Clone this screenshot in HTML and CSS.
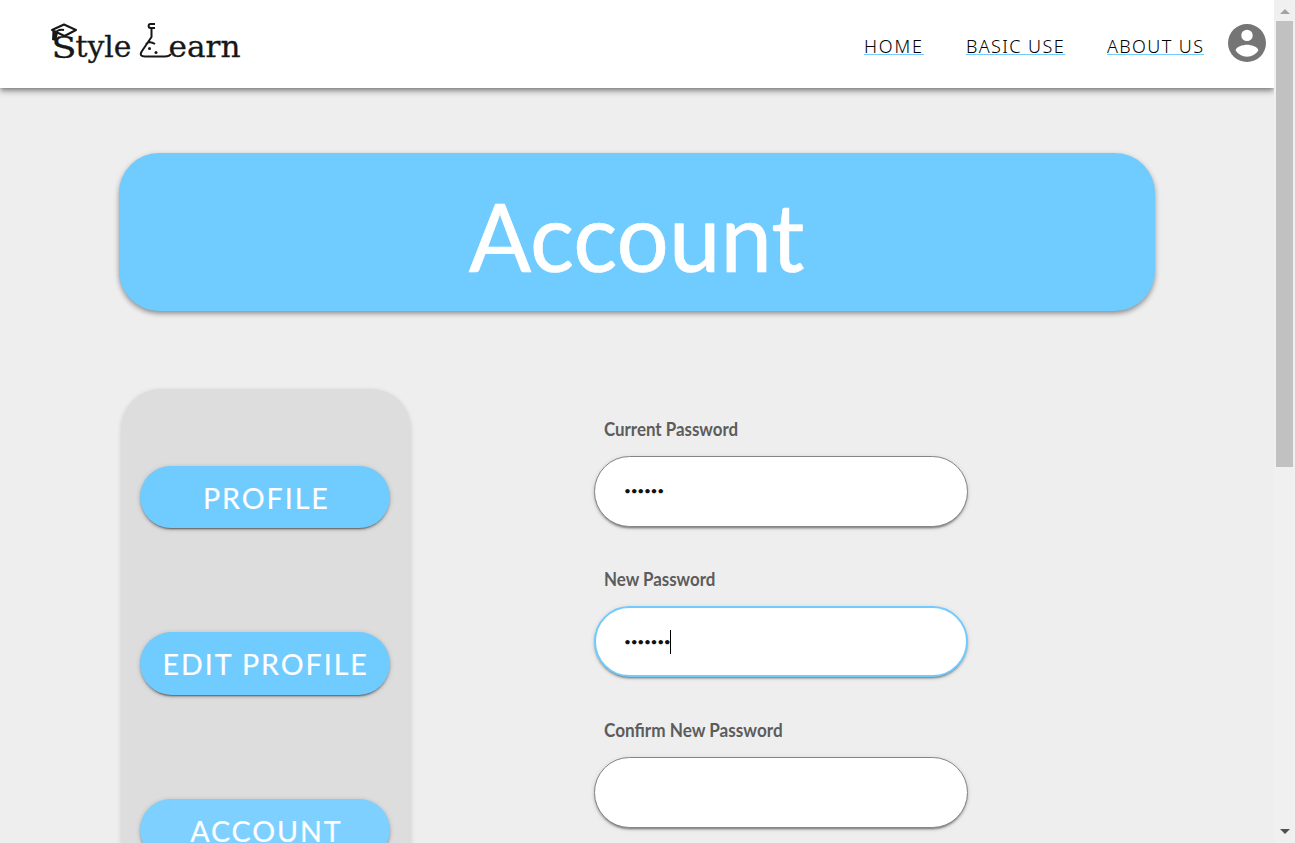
FILE: index.html
```html
<!DOCTYPE html>
<html lang="en">
<head>
<meta charset="utf-8">
<title>Style Learn - Account</title>
<link rel="stylesheet" href="styles.css">
</head>
<body>
<div class="page">
  <header class="header">
    <svg class="logo" width="200" height="56" viewBox="46 16 200 56">
      <g class="logo-text">
        <text x="51.500" y="57.500" textLength="25" lengthAdjust="spacingAndGlyphs">S</text>
        <text x="75.500" y="57" textLength="56" lengthAdjust="spacingAndGlyphs">tyle</text>
        <text x="168.500" y="57" textLength="72" lengthAdjust="spacingAndGlyphs">earn</text>
      </g>
      <g class="logo-line">
        <path d="M52 30L64 24.500L76 30L64.500 36Z"/>
        <path d="M64 30C59 29 55 31 55 36V40"/>
        <path d="M155 24H150.500C148 24 148 28 150.500 28H155M151.500 28V37L142 51C139.500 55 141 56.500 145 56.500H165C168 56.500 170 55.500 171 54M146 44C149 41 152 42 155 44"/>
      </g>
      <path d="M52.500 31L58 33L56 41L52 40Z"/>
      <circle cx="149.500" cy="48.500" r="1.500"/><circle cx="156" cy="52.500" r="1.500"/>
    </svg>
    <nav class="nav">
      <a class="link home">HOME</a>
      <a class="link basic">BASIC USE</a>
      <a class="link about">ABOUT US</a>
    </nav>
    <svg class="avatar" viewBox="2 2 20 20"><path fill-rule="evenodd" d="M12 2a10 10 0 1 0 0 20a10 10 0 0 0 0-20zm0 3a3 3 0 1 1 0 6a3 3 0 0 1 0-6zm0 14.200a7.200 7.200 0 0 1-6-3.220c.03-1.990 4-3.080 6-3.080s5.970 1.090 6 3.080a7.200 7.200 0 0 1-6 3.220z"/></svg>
  </header>
  <main class="main">
    <h1 class="banner"><span class="banner-text">Account</span></h1>
    <div class="columns">
      <aside class="sidebar">
        <a class="button"><span>PROFILE</span></a>
        <a class="button"><span>EDIT PROFILE</span></a>
        <a class="button current"><span>ACCOUNT</span></a>
      </aside>
      <form class="form">
        <label class="label">Current Password</label>
        <div class="field">••••••</div>
        <label class="label">New Password</label>
        <div class="field focused">•••••••<i class="caret"></i></div>
        <label class="label last">Confirm New Password</label>
        <div class="field"></div>
      </form>
    </div>
  </main>
</div>
<div class="scrollbar"><i class="arrow up"></i><i class="thumb"></i><i class="arrow down"></i></div>
</body>
</html>
```

FILE: styles.css
```css
* { box-sizing: border-box; }
body { margin: 0; height: 843px; overflow: hidden; display: flex; background: #eee; font-family: Lato, "Noto Sans", sans-serif; }
.page { width: 1274px; height: 843px; overflow: hidden; }
.header { height: 88px; display: flex; align-items: flex-start; background: #fff; padding: 16px 8.500px 0 46px; box-shadow: 0 2px 4px -1px rgba(0,0,0,.3), 0 4px 5px rgba(0,0,0,.2), 0 1px 10px rgba(0,0,0,.15); }
.logo { flex: none; fill: #171717; }
.logo-text { font: 30px "DejaVu Serif", serif; stroke: #171717; stroke-width: .3; }
.logo-line { fill: none; stroke: #171717; stroke-width: 2; stroke-linejoin: round; }
.nav { display: flex; gap: 42px; margin: 20px 23.500px 0 auto; }
.link { height: 19px; font-family: "Noto Sans", sans-serif; font-weight: 300; font-size: 18px; line-height: 20px; letter-spacing: 1.4px; white-space: nowrap; color: #000; border-bottom: 1px solid #70cbff; }
.home { width: 60px; letter-spacing: 1.8px; }
.basic { width: 99px; }
.about { width: 97px; }
.avatar { width: 38px; height: 38px; margin-top: 8px; fill: #757575; }
.banner { height: 158px; margin: 65px 119px 78px; border-radius: 40px; background: #70cbff; box-shadow: 0 3px 5px -1px rgba(0,0,0,.3), 0 2px 6px rgba(0,0,0,.2); color: #fff; font-size: 95px; font-weight: 400; line-height: 164px; text-align: center; }
.banner-text { display: inline-block; transform: scaleX(.972); -webkit-text-stroke: .7px #fff; }
.columns { display: flex; align-items: flex-start; padding-left: 121px; }
.sidebar { width: 290px; height: 560px; padding: 77px 21px 0 19px; border-radius: 40px; background: #ddd; box-shadow: 0 1px 5px rgba(0,0,0,.12); display: flex; flex-direction: column; gap: 104px; }
.button { flex: none; width: 250px; height: 62.400px; border-radius: 32px; background: #70cbff; color: #fff; font-size: 29px; line-height: 64px; letter-spacing: 2px; text-align: center; white-space: nowrap; box-shadow: 0 3px 1px -2px rgba(0,0,0,.3), 0 2px 2px rgba(0,0,0,.2), 0 1px 5px rgba(0,0,0,.18); }
.button span { display: inline-block; margin-left: 2px; transform: scaleX(.985); -webkit-text-stroke: .2px #fff; }
.current { background: #7dd0ff; }
.form { width: 374px; margin-left: 183px; padding-top: 29px; }
.label { display: block; height: 22px; margin: 0 0 16px 10px; color: #5c5c5c; font-size: 18px; font-weight: 700; line-height: 22px; white-space: nowrap; transform: scaleX(.938); transform-origin: left; }
.last { transform: scaleX(.952); }
.field { display: flex; align-items: center; height: 71px; margin-bottom: 41.400px; padding: 0 0 2px 29px; border: 1px solid #858585; border-radius: 36px; background: #fff; color: #111; font-size: 12px; letter-spacing: -.32px; box-shadow: 0 3px 1px -2px rgba(0,0,0,.2), 0 2px 2px rgba(0,0,0,.2), 0 1px 5px rgba(0,0,0,.12); }
.focused { border: 2px solid #70cbff; padding: 0 0 0 28px; }
.caret { width: 1px; height: 24px; background: #000; }
.scrollbar { width: 21px; height: 843px; background: #f0f0f0; display: flex; flex-direction: column; padding-left: 2px; }
.thumb { width: 17px; height: 446px; margin-top: 7px; background: #c1c1c1; }
.arrow { width: 0; height: 0; border: 5px solid transparent; margin-left: 4px; }
.up { border-top: 0; border-bottom: 5px solid #a3a3a3; margin-top: 9px; }
.down { border-bottom: 0; border-top: 5px solid #505050; margin-top: auto; margin-bottom: 9px; }
```
